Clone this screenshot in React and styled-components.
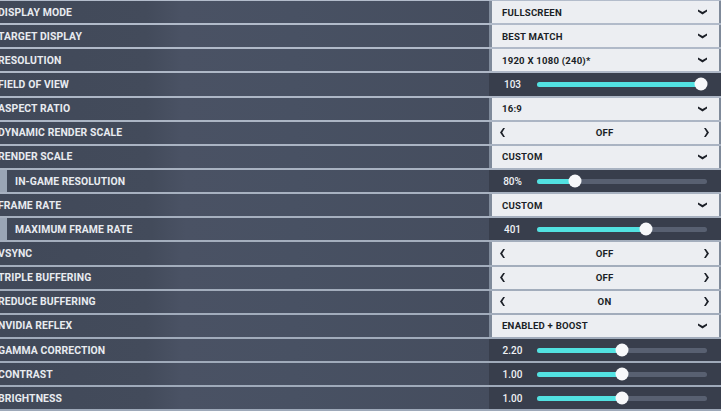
import React from "react";
import styled, { createGlobalStyle } from "styled-components";

const GlobalStyle = createGlobalStyle`
  html, body { margin: 0; padding: 0; }
  body {
    background: #a6b0bf;
    font-family: Roboto, "Liberation Sans", Arial, sans-serif;
    overflow: hidden;
  }
`;

const Panel = styled.div`
  width: 721px;
  height: 411px;
  overflow: hidden;
  display: grid;
  grid-auto-rows: 22.15px;
  row-gap: 2px;
  padding-top: 1px;
  box-sizing: border-box;
  background: linear-gradient(180deg, #b3bccb 0%, #a4aebd 60%, #9ea9b9 100%);
`;

const Row = styled.div`
  display: flex;
  background: ${(p) => (p.$slider ? "#3a414f" : "#7f8a9a")};
`;

const Label = styled.div`
  width: 489px;
  flex: none;
  display: flex;
  align-items: center;
  box-sizing: border-box;
  padding-left: ${(p) => (p.$indent ? "10px" : "0")};
  border-left: ${(p) => (p.$indent ? "7px solid #9aa5b5" : "none")};
  background: linear-gradient(
    90deg,
    #414959 0%,
    #434b5b 30%,
    #4a5264 37%,
    #485163 60%,
    #454d5e 100%
  );
  color: #e8ebf0;
  font-weight: 700;
  font-size: 10.4px;
  letter-spacing: 0.1px;
  text-transform: uppercase;
  white-space: nowrap;
  overflow: hidden;
`;

const LabelText = styled.span`
  margin-left: -2px;
`;

const Value = styled.div`
  width: 227px;
  margin-left: 3px;
  flex: none;
  box-sizing: border-box;
  display: flex;
  align-items: center;
  justify-content: space-between;
  padding: 0 12px 0 10px;
  background: #eceef2;
  color: #1b1f27;
  font-weight: 700;
  font-size: 9.6px;
  letter-spacing: 0.2px;
  white-space: nowrap;
`;

const ArrowValue = styled(Value)`
  padding: 0 10px 0 8px;
`;

const SliderValue = styled.div`
  flex: 1;
  display: flex;
  align-items: center;
  background: #383e4c;
`;

const Num = styled.span`
  width: 47px;
  margin-right: 1px;
  text-align: center;
  color: #f0f2f5;
  font-size: 10px;
  font-weight: 500;
`;

const Track = styled.div`
  position: relative;
  width: 170px;
  height: 5px;
  border-radius: 3px;
  background: #586071;
`;

const Fill = styled.div`
  position: absolute;
  left: 0;
  top: 0;
  bottom: 0;
  border-radius: 3px;
  background: #52e1e1;
`;

const Thumb = styled.div`
  position: absolute;
  top: 50%;
  width: 13px;
  height: 13px;
  border-radius: 50%;
  background: #f7f8fa;
  transform: translate(-50%, -50%);
`;

const Chevron = () => (
  <svg width="9" height="6" viewBox="0 0 9 6">
    <path d="M0 0.4 L4.5 3 L9 0.4 L9 2.4 L4.5 5.6 L0 2.4 Z" fill="#1b1f27" />
  </svg>
);

const ArrowL = () => (
  <svg width="5" height="9" viewBox="0 0 5 9">
    <path d="M3.2 0 L5 0 L2.2 4.5 L5 9 L3.2 9 L0 4.5 Z" fill="#1b1f27" />
  </svg>
);

const ArrowR = () => (
  <svg width="5" height="9" viewBox="0 0 5 9">
    <path d="M1.8 0 L0 0 L2.8 4.5 L0 9 L1.8 9 L5 4.5 Z" fill="#1b1f27" />
  </svg>
);

const rows = [
  { label: "Display Mode", type: "select", value: "FULLSCREEN" },
  { label: "Target Display", type: "select", value: "BEST MATCH" },
  { label: "Resolution", type: "select", value: "1920 X 1080 (240)*" },
  { label: "Field of View", type: "slider", value: "103", pct: 96.5 },
  { label: "Aspect Ratio", type: "select", value: "16:9" },
  { label: "Dynamic Render Scale", type: "toggle", value: "OFF" },
  { label: "Render Scale", type: "select", value: "CUSTOM" },
  { label: "In-Game Resolution", type: "slider", value: "80%", pct: 22.4, indent: true },
  { label: "Frame Rate", type: "select", value: "CUSTOM" },
  { label: "Maximum Frame Rate", type: "slider", value: "401", pct: 64, indent: true },
  { label: "Vsync", type: "toggle", value: "OFF" },
  { label: "Triple Buffering", type: "toggle", value: "OFF" },
  { label: "Reduce Buffering", type: "toggle", value: "ON" },
  { label: "Nvidia Reflex", type: "select", value: "ENABLED + BOOST" },
  { label: "Gamma Correction", type: "slider", value: "2.20", pct: 50 },
  { label: "Contrast", type: "slider", value: "1.00", pct: 50 },
  { label: "Brightness", type: "slider", value: "1.00", pct: 50 },
];

function Control({ row }) {
  if (row.type === "slider") {
    return (
      <SliderValue>
        <Num>{row.value}</Num>
        <Track>
          <Fill style={{ width: `${row.pct}%` }} />
          <Thumb style={{ left: `${row.pct}%` }} />
        </Track>
      </SliderValue>
    );
  }
  if (row.type === "toggle") {
    return (
      <ArrowValue>
        <ArrowL />
        <span>{row.value}</span>
        <ArrowR />
      </ArrowValue>
    );
  }
  return (
    <Value>
      <span>{row.value}</span>
      <Chevron />
    </Value>
  );
}

export default function App() {
  return (
    <>
      <GlobalStyle />
      <Panel>
        {rows.map((r) => (
          <Row key={r.label} $slider={r.type === "slider"}>
            <Label $indent={r.indent}>
              <LabelText>{r.label}</LabelText>
            </Label>
            <Control row={r} />
          </Row>
        ))}
      </Panel>
    </>
  );
}
